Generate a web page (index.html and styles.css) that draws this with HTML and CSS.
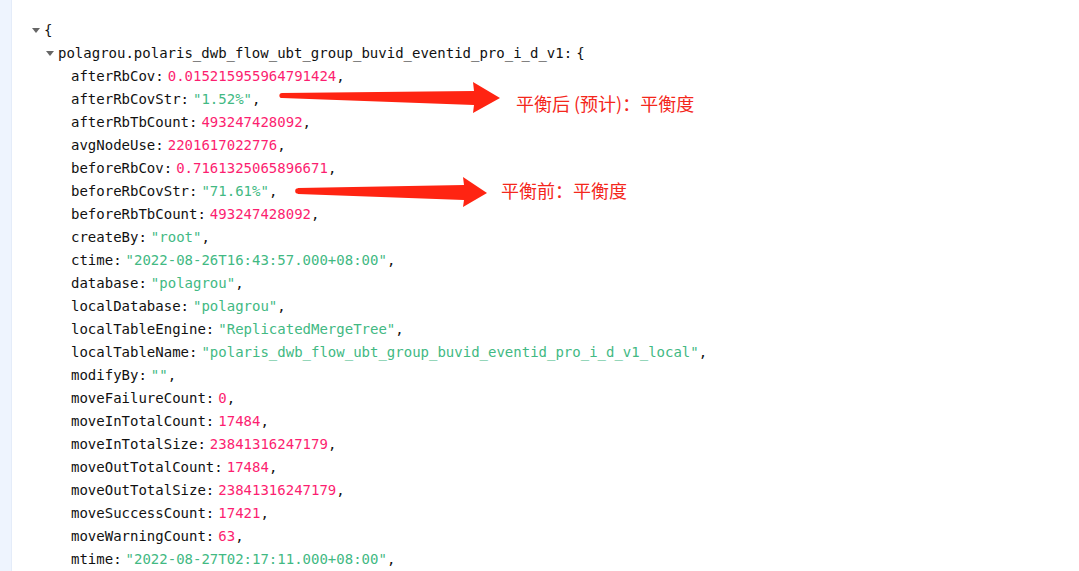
FILE: index.html
```html
<!DOCTYPE html>
<html lang="zh">
<head>
<meta charset="utf-8">
<title>JSON</title>
<link rel="stylesheet" href="styles.css">
</head>
<body>
<div class="page">
  <div class="strip"></div>
  <div class="viewer">
    <div class="node root">
      <div class="line toggle">{</div>
      <div class="node child">
        <div class="line toggle"><span class="key">polagrou.polaris_dwb_flow_ubt_group_buvid_eventid_pro_i_d_v1:</span>{</div>
        <div class="leaves">
          <div class="line"><span class="key">afterRbCov:</span><span class="num">0.015215955964791424</span>,</div>
          <div class="line"><span class="key">afterRbCovStr:</span><span class="str">"1.52%"</span>,</div>
          <div class="line"><span class="key">afterRbTbCount:</span><span class="num">493247428092</span>,</div>
          <div class="line"><span class="key">avgNodeUse:</span><span class="num">2201617022776</span>,</div>
          <div class="line"><span class="key">beforeRbCov:</span><span class="num">0.7161325065896671</span>,</div>
          <div class="line"><span class="key">beforeRbCovStr:</span><span class="str">"71.61%"</span>,</div>
          <div class="line"><span class="key">beforeRbTbCount:</span><span class="num">493247428092</span>,</div>
          <div class="line"><span class="key">createBy:</span><span class="str">"root"</span>,</div>
          <div class="line"><span class="key">ctime:</span><span class="str">"2022-08-26T16:43:57.000+08:00"</span>,</div>
          <div class="line"><span class="key">database:</span><span class="str">"polagrou"</span>,</div>
          <div class="line"><span class="key">localDatabase:</span><span class="str">"polagrou"</span>,</div>
          <div class="line"><span class="key">localTableEngine:</span><span class="str">"ReplicatedMergeTree"</span>,</div>
          <div class="line"><span class="key">localTableName:</span><span class="str">"polaris_dwb_flow_ubt_group_buvid_eventid_pro_i_d_v1_local"</span>,</div>
          <div class="line"><span class="key">modifyBy:</span><span class="str">""</span>,</div>
          <div class="line"><span class="key">moveFailureCount:</span><span class="num">0</span>,</div>
          <div class="line"><span class="key">moveInTotalCount:</span><span class="num">17484</span>,</div>
          <div class="line"><span class="key">moveInTotalSize:</span><span class="num">23841316247179</span>,</div>
          <div class="line"><span class="key">moveOutTotalCount:</span><span class="num">17484</span>,</div>
          <div class="line"><span class="key">moveOutTotalSize:</span><span class="num">23841316247179</span>,</div>
          <div class="line"><span class="key">moveSuccessCount:</span><span class="num">17421</span>,</div>
          <div class="line"><span class="key">moveWarningCount:</span><span class="num">63</span>,</div>
          <div class="line"><span class="key">mtime:</span><span class="str">"2022-08-27T02:17:11.000+08:00"</span>,</div>
        </div>
      </div>
    </div>
  </div>

  <svg class="arrows" width="1079" height="571" viewBox="0 0 1079 571" xmlns="http://www.w3.org/2000/svg">
    <g fill="#ff2412">
      <circle cx="282" cy="95.5" r="2.6"/>
      <polygon points="282,93 474,91 473,82 500,98 473,113 474,105 282,98"/>
      <circle cx="298" cy="191" r="2.8"/>
      <polygon points="298,188 464,185 463,177 487,193 463,207 464,200 298,194"/>
    </g>
  </svg>
  <div class="note note-after">平衡后 (预计)：平衡度</div>
  <div class="note note-before">平衡前：平衡度</div>
</div>
</body>
</html>
```

FILE: styles.css
```css
html, body {
  margin: 0;
  padding: 0;
  background: #ffffff;
}

.page {
  position: relative;
  display: flex;
  width: 1079px;
  height: 571px;
  overflow: hidden;
}

.strip {
  width: 11px;
  flex: 0 0 11px;
  background: #eef4fe;
  border-right: 1px solid #e4ecf9;
}

.viewer {
  flex: 1;
  padding: 19px 0 0 32px;
  font-family: "DejaVu Sans Mono", "Liberation Mono", monospace;
  font-size: 14px;
  line-height: 23px;
  color: #111111;
}

.line {
  white-space: pre;
  height: 23px;
}

.toggle {
  position: relative;
}

.toggle::before {
  content: "";
  position: absolute;
  left: -12px;
  top: 9px;
  width: 0;
  height: 0;
  border-left: 4px solid transparent;
  border-right: 4px solid transparent;
  border-top: 5px solid #666666;
}

.child {
  margin-left: 14px;
}

.leaves {
  margin-left: 13px;
}

.key {
  margin-right: 4px;
  color: #111111;
}

.num {
  color: #fc1e70;
}

.str {
  color: #42b983;
}

.arrows {
  position: absolute;
  left: 0;
  top: 0;
  pointer-events: none;
}

.note {
  position: absolute;
  font-family: "Noto Sans CJK SC", "Noto Sans", sans-serif;
  font-size: 18px;
  line-height: 18px;
  color: #f4271c;
  white-space: nowrap;
}

.note-after {
  left: 516px;
  top: 94px;
}

.note-before {
  left: 501px;
  top: 181px;
}
```
